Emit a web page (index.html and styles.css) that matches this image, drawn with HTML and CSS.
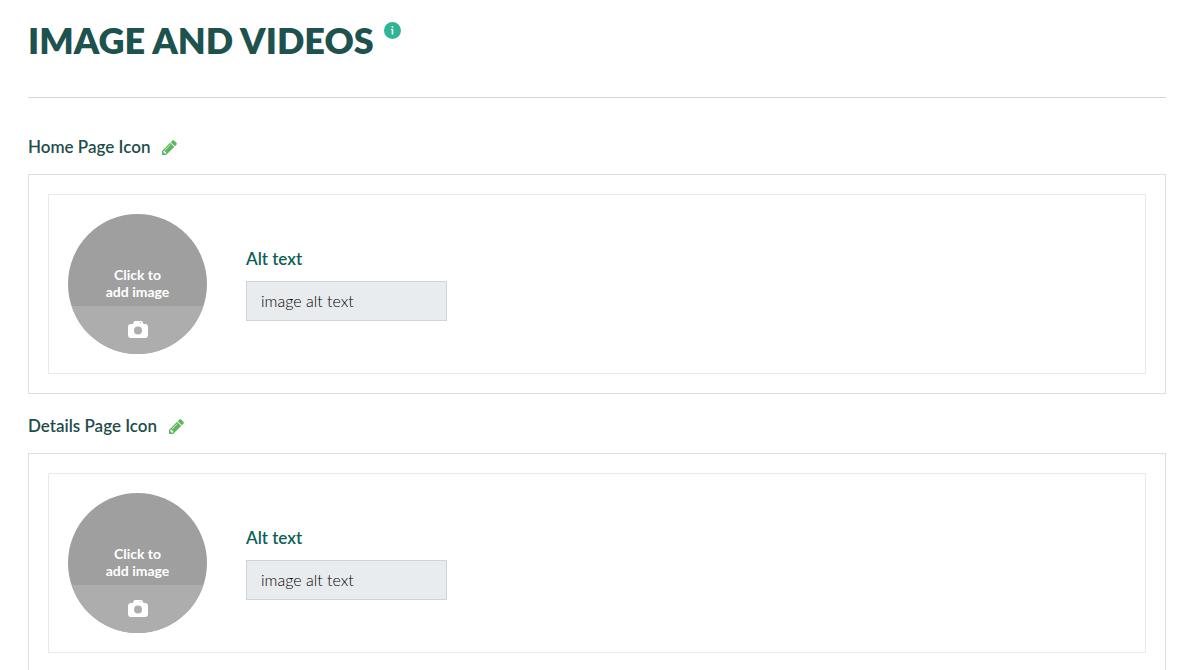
FILE: index.html
```html
<!DOCTYPE html>
<html lang="en">
<head>
<meta charset="utf-8">
<title>Image and Videos</title>
<link rel="stylesheet" href="styles.css">
</head>
<body>
<svg class="sprite" aria-hidden="true">
  <symbol id="pencil" viewBox="0 0 1536 1536">
    <path fill="currentColor" d="M363 1408l91-91-235-235-91 91v107h128v128h107zM886 480q0-22-22-22-10 0-17 7l-542 542q-7 7-7 17 0 22 22 22 10 0 17-7l542-542q7-7 7-17zM832 288l416 416-832 832H0v-416zM1515 384q0 53-37 90l-166 166-416-416 166-165q36-38 90-38 53 0 91 38l235 234q37 39 37 91z"/>
  </symbol>
  <symbol id="camera" viewBox="0 0 20 17">
    <path fill="currentColor" fill-rule="evenodd" d="M5 3 5.500 1.200Q6 0 7.400 0H13Q14.300 0 14.800 1.200L15.500 3H17q3 0 3 3v8q0 3-3 3H3q-3 0-3-3V6q0-3 3-3zM10 5.500a4 4 0 1 0 0 8 4 4 0 0 0 0-8z"/>
    <circle cx="12.500" cy="1.500" r=".6" fill="#adadad"/>
  </symbol>
</svg>
<main class="page">
  <header class="page-header">
    <h1 class="title">IMAGE AND VIDEOS</h1>
    <button class="info" type="button" aria-label="Information">
      <svg viewBox="0 0 17 17"><circle cx="8.500" cy="8.500" r="8.500" fill="#2fb594"/><path fill="#fff" d="M7.600 4.200h1.700v1.500H7.600zM7 7h2.300v5.500H7.700V7.900H7z"/></svg>
    </button>
  </header>

  <section class="group">
    <div class="group-header">
      <h2 class="group-title">Home Page Icon</h2>
      <button class="edit" type="button" aria-label="Edit Home Page Icon"><svg><use href="#pencil"/></svg></button>
    </div>
    <div class="panel">
      <div class="card">
        <button class="upload" type="button">
          <span class="upload-text">Click to<br>add image</span>
          <span class="upload-bar"><svg class="camera"><use href="#camera"/></svg></span>
        </button>
        <div class="field">
          <label class="label" for="home-alt">Alt text</label>
          <input class="input" id="home-alt" type="text" value="image alt text" readonly>
        </div>
      </div>
    </div>
  </section>

  <section class="group">
    <div class="group-header">
      <h2 class="group-title">Details Page Icon</h2>
      <button class="edit" type="button" aria-label="Edit Details Page Icon"><svg><use href="#pencil"/></svg></button>
    </div>
    <div class="panel">
      <div class="card">
        <button class="upload" type="button">
          <span class="upload-text">Click to<br>add image</span>
          <span class="upload-bar"><svg class="camera"><use href="#camera"/></svg></span>
        </button>
        <div class="field">
          <label class="label" for="details-alt">Alt text</label>
          <input class="input" id="details-alt" type="text" value="image alt text" readonly>
        </div>
      </div>
    </div>
  </section>
</main>
</body>
</html>
```
FILE: styles.css
```css
* { box-sizing: border-box; }
html { scrollbar-width: none; }
body {
  margin: 0;
  background: #fff;
  font-family: Lato, "Open Sans", sans-serif;
  color: #1e4e4a;
}
button { padding: 0; border: 0; background: none; font: inherit; cursor: pointer; }
svg { display: block; }
.sprite { position: absolute; width: 0; height: 0; }
.page { padding: 16px 34px 24px 28px; }
.page-header {
  display: flex;
  align-items: flex-start;
  gap: 10px;
  padding-bottom: 33px;
  border-bottom: 1px solid #d6d6d6;
  margin-bottom: 17px;
}
.title { margin: 0; font-size: 36px; line-height: 48px; font-weight: 800; color: #1e524e; }
.info { width: 17px; height: 17px; margin-top: 6px; }
.info svg { width: 17px; height: 17px; }
.group-header {
  display: flex;
  align-items: center;
  gap: 12px;
  padding: 20px 0 15px;
}
.group-title { margin: 0; font-size: 17px; line-height: 24px; font-weight: 600; }
.edit { color: #5cb85c; }
.edit svg { width: 15px; height: 15px; }
.panel { padding: 19px; border: 1px solid #dedfe2; }
.card {
  display: flex;
  align-items: center;
  gap: 39px;
  padding: 19px;
  border: 1px solid #e9e9e9;
}
.upload {
  display: flex;
  flex-direction: column;
  justify-content: flex-end;
  flex: none;
  width: 139px;
  height: 140px;
  border-radius: 50%;
  overflow: hidden;
  background: #9f9f9f;
  color: #fff;
}
.upload-text { padding-bottom: 6px; font-size: 14px; line-height: 17px; font-weight: 700; }
.upload-bar {
  display: flex;
  align-items: center;
  justify-content: center;
  height: 48px;
  padding-bottom: 2px;
  background: #adadad;
}
.camera { width: 20px; height: 17px; }
.field { display: flex; flex-direction: column; gap: 10px; }
.label { font-size: 17px; line-height: 24px; font-weight: 600; color: #0c5f55; }
.input {
  width: 201px;
  height: 40px;
  padding: 0 14px 2px;
  border: 1px solid #ced4da;
  border-radius: 0;
  background: #e9ecef;
  font: 300 16px/24px Lato, "Open Sans", sans-serif;
  color: #000;
}
```
